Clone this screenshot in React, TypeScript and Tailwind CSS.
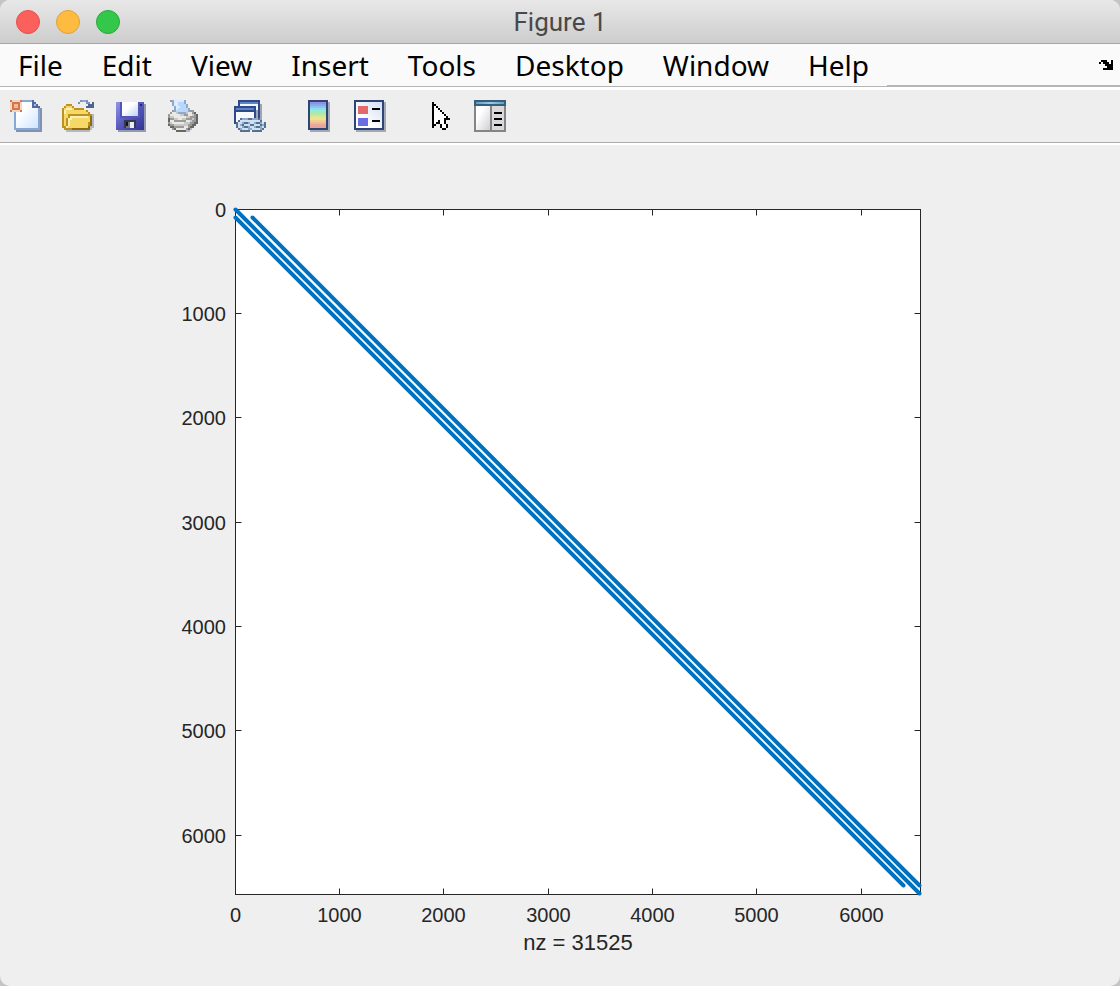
import type { ReactNode } from "react";

const palette: Record<string, string> = {
  k: "#000000",
  w: "#ffffff",
  o: "#d4754a",
  p: "#f0b894",
  y: "#f6d768",
  c: "#fff2b0",
  g: "#bc9220",
  d: "#8f6b10",
  s: "#b4b8c0",
  b: "#7b93b8",
  n: "#4c6590",
  a: "#9a9a98",
  e: "#666664",
  f: "#c9c9c7",
  h: "#e9e9e6",
  i: "#b9d6fb",
  j: "#dcebff",
  l: "#8fa9cc",
  m: "#56708f",
  q: "#cfe0f2",
};

function Pixels({ rows, x = 0, y = 0 }: { rows: string[]; x?: number; y?: number }) {
  return (
    <g shapeRendering="crispEdges">
      {rows.flatMap((row, r) =>
        [...row].map((ch, c) =>
          palette[ch] ? (
            <rect key={`${r}-${c}`} x={x + c} y={y + r} width="1" height="1" fill={palette[ch]} />
          ) : null,
        ),
      )}
    </g>
  );
}

function Icon({ children }: { children: ReactNode }) {
  return (
    <svg viewBox="0 0 16 16" className="block size-8" shapeRendering="crispEdges" aria-hidden="true">
      {children}
    </svg>
  );
}

const sun = ["o....o", ".oooo.", ".oppo.", ".oppo.", ".oooo.", "o....o"];

function NewIcon() {
  return (
    <Icon>
      <defs>
        <linearGradient id="sheet" x1="0" y1="0" x2="1" y2="1">
          <stop offset="0.3" stopColor="#ffffff" />
          <stop offset="1" stopColor="#cfe5ff" />
        </linearGradient>
      </defs>
      <path d="M3 3H15V4H16V16H3Z" fill="#8490b2" />
      <path d="M2 5H6V0H12V1H13V2H14V3H15V15H2Z" fill="#86a9d4" />
      <path d="M3 5H6V1H11V4H14V14H3Z" fill="url(#sheet)" />
      <path d="M11 0H12V1H13V2H14V3H15V4H11Z" fill="#5268a0" />
      <path d="M12 2H13V3H12Z" fill="#a9bedf" />
      <rect x="0" y="0" width="6" height="6" fill="#f3d5c4" />
      <Pixels rows={sun} />
    </Icon>
  );
}

const folder = [
  ".........bllb...",
  "........b...bb.n",
  "..ggg........nnn",
  ".gyyyg......nnnn",
  "gycccyggggg.....",
  "gcyyyyyyyyyyg...",
  "gcyyyyyyyyyyyg..",
  "gyyggggggggggggs",
  "gyygcccccccccyds",
  "gygccyyyyyyyyyds",
  "gygcyyyyyyyyyyds",
  "gygcyyyyyyyyygds",
  "gygcyyyyyyyyygds",
  "ggcyyyyyyyyyydss",
  ".ggggddddddddds.",
  "..ssssssssssss..",
];

function SaveIcon() {
  return (
    <Icon>
      <defs>
        <linearGradient id="disk" x1="0" y1="0" x2="1" y2="1">
          <stop offset="0" stopColor="#9296e8" />
          <stop offset="0.5" stopColor="#5658bd" />
          <stop offset="1" stopColor="#323391" />
        </linearGradient>
        <linearGradient id="diskLabel" x1="0" y1="0" x2="1" y2="1">
          <stop offset="0.4" stopColor="#ffffff" />
          <stop offset="1" stopColor="#b9d4f5" />
        </linearGradient>
      </defs>
      <rect x="2" y="2" width="14" height="14" fill="#929bad" />
      <rect x="1" y="1" width="14" height="14" fill="url(#disk)" />
      <rect x="3" y="1" width="10" height="8" fill="#5257b4" />
      <rect x="4" y="1" width="8" height="7" fill="url(#diskLabel)" />
      <rect x="13" y="2" width="1" height="1" fill="#262870" />
      <rect x="5" y="10" width="6" height="4" fill="#343850" />
      <rect x="6" y="11" width="3" height="3" fill="#707682" />
      <rect x="8" y="11" width="2" height="3" fill="#e8edf0" />
      <rect x="6" y="11" width="1" height="2" fill="#11131b" />
    </Icon>
  );
}

const printer = [
  "..aljjjjjl......",
  "...ljjiiil......",
  "...ljjiiiil.....",
  "....ljjiiil.....",
  "....ljiiiiil....",
  "...aliiiiiilaa..",
  "..ahhfllllfhhae.",
  ".ahhhhhffaahhfae",
  ".affhhhhhhffaaae",
  ".eaaffhhffaaafae",
  ".ehhaaaaaahhfaae",
  ".afhhhhhhfffaaee",
  ".eaafffffffaaee.",
  "..eeaaaaahhaee..",
  "...aehhhhhaes...",
  ".....eeeeess....",
];

const chain = [
  "..mlllmmlllm....",
  ".mqqqqqqqqqqm...",
  "mqqlmmlqqlmmlqm.",
  "mqlmqqqmmqqqmlm.",
  "mqqlmmlqqlmmlqm.",
  ".mlqqqllqqqqlm..",
  "..mmmmm.mmmmm...",
];

function LinkIcon() {
  return (
    <Icon>
      <path d="M4 2H14V10H4Z" fill="#9ca6b9" />
      <rect x="2" y="0" width="11" height="9" fill="#2f4a86" />
      <rect x="3" y="1" width="9" height="1" fill="#5d86c8" />
      <rect x="3" y="2" width="9" height="6" fill="#f4f6ff" />
      <path d="M2 5H12V12H2Z" fill="#9ca6b9" />
      <rect x="0" y="3" width="11" height="9" fill="#2f4a86" />
      <rect x="1" y="4" width="9" height="1" fill="#5d86c8" />
      <rect x="1" y="6" width="9" height="6" fill="#f8f8ff" />
      <Pixels rows={chain} x={1} y={9} />
    </Icon>
  );
}

const spectrum = [
  "#9090e4", "#8ea6ec", "#8cc4f0", "#8ee0ec", "#94ecd8", "#a4eab8", "#bfe8a0",
  "#dce894", "#eee294", "#f0d090", "#efbd92", "#eaa898", "#e8a49a",
];

function ColorbarIcon() {
  return (
    <Icon>
      <rect x="4" y="1" width="10" height="15" fill="#a2a9b6" />
      <rect x="3" y="0" width="10" height="15" fill="#2e4474" />
      {spectrum.map((color, i) => (
        <rect key={color} x="4" y={1 + i} width="8" height="1" fill={color} />
      ))}
    </Icon>
  );
}

function LegendIcon() {
  return (
    <Icon>
      <defs>
        <linearGradient id="legendFill" x1="1" y1="0" x2="0" y2="1">
          <stop offset="0" stopColor="#d3def4" />
          <stop offset="0.7" stopColor="#ffffff" />
        </linearGradient>
      </defs>
      <rect x="1" y="1" width="15" height="15" fill="#a2a9b6" />
      <rect width="15" height="15" fill="#2e4474" />
      <rect x="1" y="1" width="13" height="13" fill="url(#legendFill)" />
      <rect x="2" y="3" width="5" height="4" fill="#e26a6a" />
      <rect x="2" y="9" width="5" height="4" fill="#6c6ce4" />
      <rect x="9" y="4" width="4" height="1" />
      <rect x="9" y="10" width="4" height="1" />
    </Icon>
  );
}

const cursor = [
  "k........",
  "kk.......",
  "kwk......",
  "kwwk.....",
  "kwwwk....",
  "kwwwwk...",
  "kwwwwwk..",
  "kwwwwwwk.",
  "kwwwwwkkk",
  "kwwkwwk..",
  "kwkkwwk..",
  "kk..kwwk.",
  "k...kwwk.",
  ".....kk..",
];

function InspectorIcon() {
  return (
    <Icon>
      <defs>
        <linearGradient id="pane" x1="0" y1="0" x2="1" y2="1">
          <stop offset="0.3" stopColor="#ffffff" />
          <stop offset="1" stopColor="#d0d0d4" />
        </linearGradient>
        <linearGradient id="paneBar">
          <stop offset="0" stopColor="#5f9cc2" />
          <stop offset="0.5" stopColor="#9bcbe6" />
          <stop offset="1" stopColor="#62a0c6" />
        </linearGradient>
      </defs>
      <rect width="16" height="16" fill="#858588" />
      <rect x="1" y="3" width="7" height="12" fill="url(#pane)" />
      <rect x="9" y="3" width="6" height="12" fill="#d9d9db" />
      <rect width="16" height="3" fill="#365f7c" />
      <rect x="1" y="1" width="14" height="1" fill="url(#paneBar)" />
      {[6, 9, 12].map((y) => (
        <rect key={y} x="10" y={y} width="4" height="1" />
      ))}
    </Icon>
  );
}

const dockArrow = [
  ".kkk..k",
  "k.kkk.k",
  "...kkkk",
  "....kkk",
  "..kkkkk",
];

const menus = ["File", "Edit", "View", "Insert", "Tools", "Desktop", "Window", "Help"];

const toolGroups: { label: string; icon: ReactNode }[][] = [
  [
    { label: "New Figure", icon: <NewIcon /> },
    { label: "Open File", icon: <Icon><Pixels rows={folder} /></Icon> },
    { label: "Save Figure", icon: <SaveIcon /> },
    { label: "Print Figure", icon: <Icon><Pixels rows={printer} /></Icon> },
  ],
  [{ label: "Link Plot", icon: <LinkIcon /> }],
  [
    { label: "Insert Colorbar", icon: <ColorbarIcon /> },
    { label: "Insert Legend", icon: <LegendIcon /> },
  ],
  [
    { label: "Edit Plot", icon: <Icon><Pixels rows={cursor} x={5} y={1} /></Icon> },
    { label: "Open Property Inspector", icon: <InspectorIcon /> },
  ],
];

const left = 235.5;
const top = 65.5;
const size = 685;
const extent = 6562;
const ticks = [0, 1000, 2000, 3000, 4000, 5000, 6000];
const at = (v: number) => Math.floor((v / extent) * size);

function SparsityPlot() {
  const right = left + size;
  const bottom = top + size;
  return (
    <svg viewBox="0 0 1120 842" className="block h-auto w-full" role="img" aria-label="Sparsity pattern">
      <rect x={left} y={top} width={size} height={size} fill="#ffffff" stroke="#262626" />
      <g stroke="#262626">
        {ticks.slice(1).map((t) => (
          <path
            key={t}
            d={`M${left + at(t)} ${top}v6M${left + at(t)} ${bottom}v-6M${left} ${top + at(t)}h6M${right} ${top + at(t)}h-6`}
          />
        ))}
      </g>
      <g stroke="#0072bd" strokeWidth="4" strokeLinecap="round">
        <path d={`M${left} ${top}L${right - 1} ${bottom - 1}`} />
        <path d={`M${left} ${top + 8}L${right - 17} ${bottom - 9}`} />
        <path d={`M${left + 17} ${top + 8}L${right - 1} ${bottom - 9}`} />
      </g>
      <g fill="#262626" fontFamily="'Liberation Sans', Arial, sans-serif" fontSize="20">
        {ticks.map((t) => (
          <g key={t}>
            <text x="226" y={top + at(t) + 7} textAnchor="end">{t}</text>
            <text x={left + at(t)} y="778" textAnchor="middle">{t}</text>
          </g>
        ))}
        <text x={left + size / 2} y="806" fontSize="22" textAnchor="middle">nz = 31525</text>
      </g>
    </svg>
  );
}

export default function App() {
  return (
    <div className="bg-[#c4c4c4]">
      <main className="overflow-hidden rounded-[10px] bg-[#efefef]">
        <header className="grid h-11 grid-cols-[1fr_auto_1fr] items-center border-b border-[#a5a5a5] bg-linear-to-b from-[#e8e8e8] to-[#cdcdcd] px-4">
          <div className="flex gap-4">
            <button aria-label="Close" className="size-6 rounded-full border border-[#e1504b] bg-[#fc605c]" />
            <button aria-label="Minimize" className="size-6 rounded-full border border-[#dea136] bg-[#fdbc40]" />
            <button aria-label="Zoom" className="size-6 rounded-full border border-[#27a93a] bg-[#34c84a]" />
          </div>
          <h1 className="font-[Roboto] text-[26px] leading-8 text-[#484848]">Figure 1</h1>
        </header>

        <nav className="flex h-[46px] items-start border-b-3 border-white bg-[#fafafa]">
          <div className="flex h-[43px] items-center gap-[39px] border-b border-[#b5b5b5] px-[18px]">
            {menus.map((name) => (
              <button key={name} className="font-['Noto_Sans',sans-serif] text-[28px] leading-10 text-black">
                {name}
              </button>
            ))}
          </div>
          <div className="flex h-[43px] flex-1 items-center justify-end border-b-2 border-[#b5b5b5] pr-[7px]">
            <button aria-label="Dock Figure">
              <svg viewBox="0 0 7 5" className="block h-[10px] w-[14px]" aria-hidden="true">
                <Pixels rows={dockArrow} />
              </svg>
            </button>
          </div>
        </nav>

        <div role="toolbar" aria-label="Figure Toolbar" className="border-b-2 border-white">
          <div className="flex h-[53px] items-center gap-9 border-b border-[#acacac] bg-[#eeeeee] px-[10px]">
            {toolGroups.map((group, i) => (
              <div key={i} className="flex gap-5">
                {group.map(({ label, icon }) => (
                  <button key={label} aria-label={label} title={label}>
                    {icon}
                  </button>
                ))}
              </div>
            ))}
          </div>
        </div>

        <div className="-mt-px">
          <SparsityPlot />
        </div>
      </main>
    </div>
  );
}
